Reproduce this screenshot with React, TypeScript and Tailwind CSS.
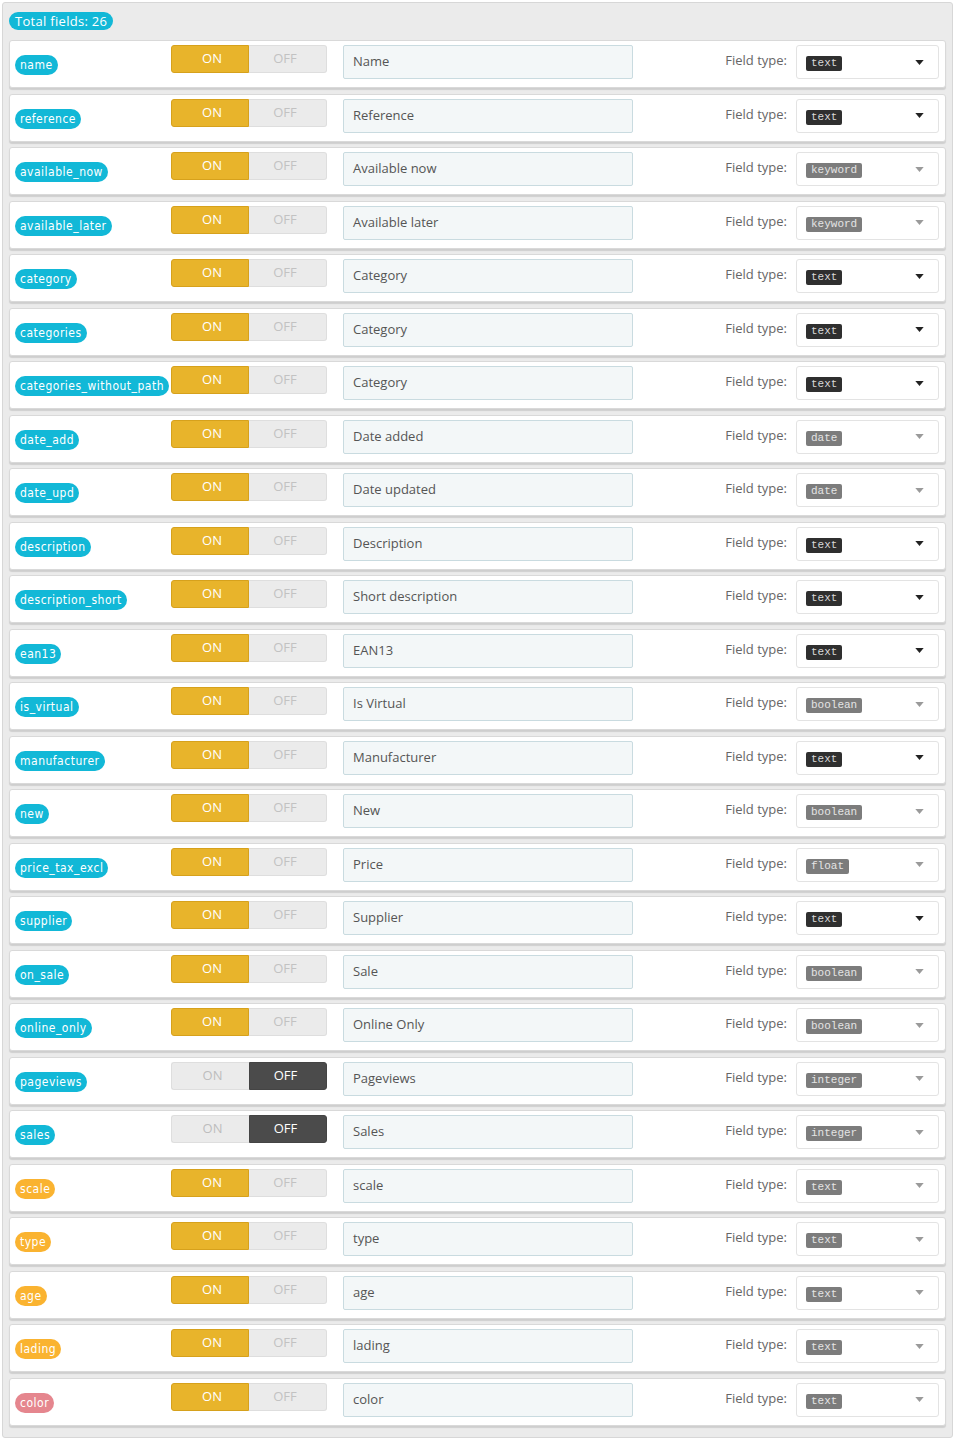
import React from 'react';

type Field = {
    key: string;
    label: string;
    type: string;
    locked: boolean;
    on: boolean;
    color: 'cyan' | 'orange' | 'pink';
};

const fields: Field[] = [
    { key: 'name', label: 'Name', type: 'text', locked: false, on: true, color: 'cyan' },
    { key: 'reference', label: 'Reference', type: 'text', locked: false, on: true, color: 'cyan' },
    { key: 'available_now', label: 'Available now', type: 'keyword', locked: true, on: true, color: 'cyan' },
    { key: 'available_later', label: 'Available later', type: 'keyword', locked: true, on: true, color: 'cyan' },
    { key: 'category', label: 'Category', type: 'text', locked: false, on: true, color: 'cyan' },
    { key: 'categories', label: 'Category', type: 'text', locked: false, on: true, color: 'cyan' },
    { key: 'categories_without_path', label: 'Category', type: 'text', locked: false, on: true, color: 'cyan' },
    { key: 'date_add', label: 'Date added', type: 'date', locked: true, on: true, color: 'cyan' },
    { key: 'date_upd', label: 'Date updated', type: 'date', locked: true, on: true, color: 'cyan' },
    { key: 'description', label: 'Description', type: 'text', locked: false, on: true, color: 'cyan' },
    { key: 'description_short', label: 'Short description', type: 'text', locked: false, on: true, color: 'cyan' },
    { key: 'ean13', label: 'EAN13', type: 'text', locked: false, on: true, color: 'cyan' },
    { key: 'is_virtual', label: 'Is Virtual', type: 'boolean', locked: true, on: true, color: 'cyan' },
    { key: 'manufacturer', label: 'Manufacturer', type: 'text', locked: false, on: true, color: 'cyan' },
    { key: 'new', label: 'New', type: 'boolean', locked: true, on: true, color: 'cyan' },
    { key: 'price_tax_excl', label: 'Price', type: 'float', locked: true, on: true, color: 'cyan' },
    { key: 'supplier', label: 'Supplier', type: 'text', locked: false, on: true, color: 'cyan' },
    { key: 'on_sale', label: 'Sale', type: 'boolean', locked: true, on: true, color: 'cyan' },
    { key: 'online_only', label: 'Online Only', type: 'boolean', locked: true, on: true, color: 'cyan' },
    { key: 'pageviews', label: 'Pageviews', type: 'integer', locked: true, on: false, color: 'cyan' },
    { key: 'sales', label: 'Sales', type: 'integer', locked: true, on: false, color: 'cyan' },
    { key: 'scale', label: 'scale', type: 'text', locked: true, on: true, color: 'orange' },
    { key: 'type', label: 'type', type: 'text', locked: true, on: true, color: 'orange' },
    { key: 'age', label: 'age', type: 'text', locked: true, on: true, color: 'orange' },
    { key: 'lading', label: 'lading', type: 'text', locked: true, on: true, color: 'orange' },
    { key: 'color', label: 'color', type: 'text', locked: true, on: true, color: 'pink' },
];

const badgeColors = {
    cyan: 'bg-[#12b8d7]',
    orange: 'bg-[#fab330]',
    pink: 'bg-[#e5868e]',
};

const FieldRow: React.FC<{ field: Field }> = ({ field }) => (
    <div className="flex items-start h-[48px] mb-[5.5px] pl-[5px] pr-[6px] pt-[4px] bg-white border border-[#d9d9d9] rounded-[3px] shadow-[0_2px_1px_rgba(0,0,0,0.12)]">
        {/* field key badge */}
        <div className="flex w-[156px] pt-[10px]">
            <span
                className={`h-[20px] leading-[20px] px-[5px] rounded-full text-white text-[12px] tracking-[0.5px] font-['DejaVu_Sans_Condensed','Liberation_Sans_Narrow',sans-serif] ${badgeColors[field.color]}`}
            >
                {field.key}
            </span>
        </div>

        {/* on/off switch */}
        <div className="flex h-[28px] w-[156px] text-[13px] font-['Open_Sans',sans-serif]">
            <div
                className={
                    field.on
                        ? 'w-[78px] flex items-center justify-center pl-[4px] rounded-l-[3px] bg-[#e8b42b] border border-[#d6a11c] text-white'
                        : 'w-[78px] flex items-center justify-center pl-[4px] rounded-l-[3px] bg-[#ebebeb] border border-[#dedede] border-r-0 text-[#bdbdbd]'
                }
            >
                ON
            </div>
            <div
                className={
                    field.on
                        ? 'w-[78px] flex items-center justify-center pr-[5px] rounded-r-[3px] bg-[#ebebeb] border border-[#dedede] border-l-0 text-[#c2c2c2]'
                        : 'w-[78px] flex items-center justify-center pr-[5px] rounded-r-[3px] bg-[#4b4b4b] border border-[#444] text-white'
                }
            >
                OFF
            </div>
        </div>

        {/* label input */}
        <div className="ml-[16px] w-[290px] h-[34px] flex items-center px-[9px] bg-[#f3f7f8] border border-[#c9dbe0] rounded-[2px] text-[13px] text-[#555] font-['Open_Sans',sans-serif]">
            {field.label}
        </div>

        <div className="flex-1 flex justify-end pt-[6px] pr-[9px] text-[13px] text-[#666] font-['Open_Sans',sans-serif]">
            Field type:
        </div>

        {/* type select */}
        <div className="w-[143px] h-[34px] flex items-center pl-[9px] pr-[14px] bg-white border border-[#e3e3e3] rounded-[3px]">
            <span
                className={
                    field.locked
                        ? "mt-[3px] h-[15px] leading-[15px] px-[5px] rounded-[2px] bg-[#7c7c7c] text-[#e4e4e4] text-[11px] font-['Liberation_Mono',monospace]"
                        : "mt-[3px] h-[15px] leading-[15px] px-[5px] rounded-[2px] bg-[#2f2f2f] text-[#d8d8d8] text-[11px] font-['Liberation_Mono',monospace]"
                }
            >
                {field.type}
            </span>
            <svg viewBox="0 0 10 6" className="ml-auto w-[9px] h-[5px]">
                <path d="M0 0h10L5 6z" fill={field.locked ? '#9a9a9a' : '#222'} />
            </svg>
        </div>
    </div>
);

export default function App() {
    return (
        <div className="p-[2px] bg-white">
            <div className="w-[951px] bg-[#ebebeb] border border-[#d7d7d7] rounded-[3px] pt-[9px] pl-[6px] pr-[6px] pb-[6px]">
                <div className="flex mb-[10px]">
                    <span className="h-[18px] leading-[18px] px-[6px] rounded-full bg-[#12b8d7] text-white text-[13px] tracking-[0.3px] font-['Open_Sans',sans-serif]">
                        Total fields: 26
                    </span>
                </div>
                {fields.map(f => (
                    <FieldRow key={f.key} field={f} />
                ))}
            </div>
        </div>
    );
}
